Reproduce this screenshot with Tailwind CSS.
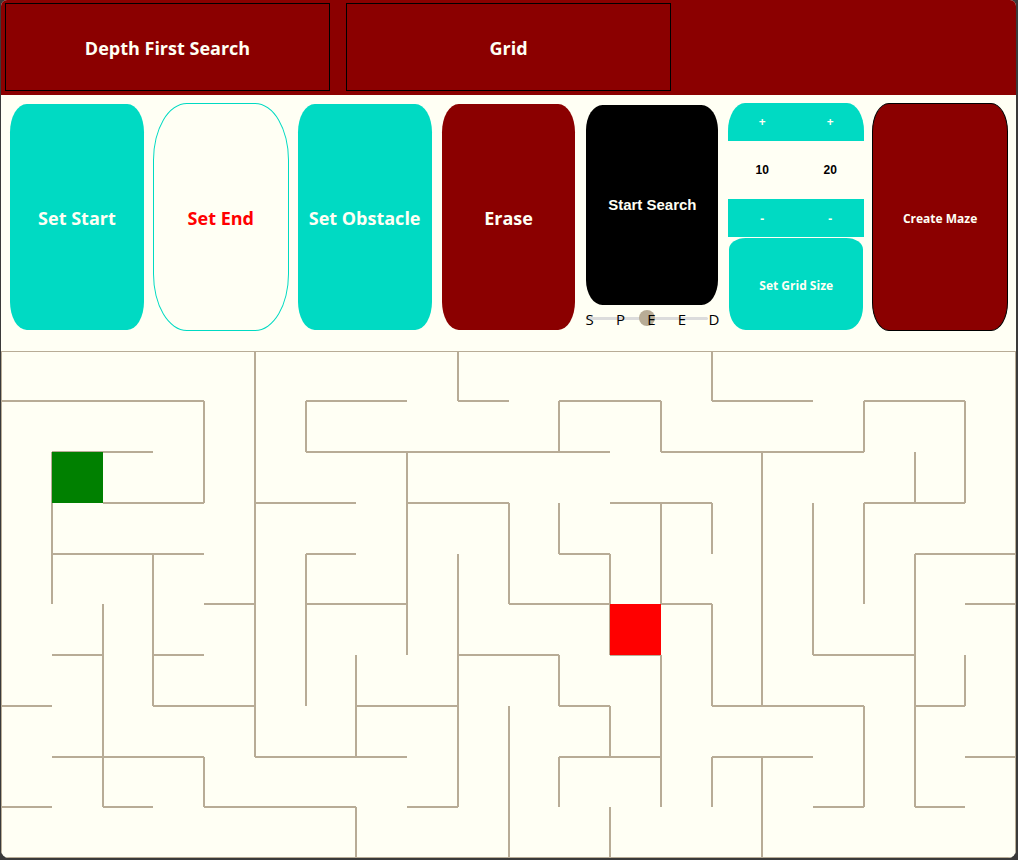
<!DOCTYPE html>
<html lang="en">
<head>
<meta charset="utf-8">
<meta name="viewport" content="width=device-width, initial-scale=1">
<title>Maze Search</title>
<script src="https://cdn.jsdelivr.net/npm/@tailwindcss/browser@4"></script>
</head>
<body class="bg-[#3a3a3a] font-['Open_Sans','Noto_Sans',sans-serif]">
<div class="flex min-h-screen flex-col pr-0.5 pb-0.5 pl-px">
  <main class="flex flex-1 flex-col overflow-hidden rounded-t-md rounded-b-lg bg-[#fffff4]">

    <header class="flex gap-4 bg-[#8b0000] px-1 pt-[3px] pb-1 text-lg font-bold text-[#fffff4]">
      <button type="button" class="h-[88px] w-[325px] border border-black pt-0.5">Depth First Search</button>
      <button type="button" class="h-[88px] w-[325px] border border-black pt-0.5">Grid</button>
    </header>

    <section aria-label="Tools" class="grid h-[256px] grid-cols-7 gap-2 px-2 pt-2 pb-5 text-lg font-bold text-[#fffff4]">
      <button type="button" class="m-px rounded-[12.5%] bg-[#00dac3] pt-0.5">Set Start</button>
      <button type="button" class="rounded-[25%] border border-[#00dac3] pt-0.5 text-[#ff0000]">Set End</button>
      <button type="button" class="m-px rounded-[12.5%] bg-[#00dac3] pt-0.5 whitespace-nowrap">Set Obstacle</button>
      <button type="button" class="m-px rounded-[12.5%] bg-[#8b0000] pt-0.5">Erase</button>

      <div class="flex flex-col">
        <button type="button" class="mx-0.5 mt-0.5 h-[200px] rounded-[12.5%] bg-black font-['Liberation_Sans',Arial,sans-serif] text-[15px]">Start Search</button>
        <div class="relative flex flex-1 items-center">
          <input id="speed" type="range" min="0" max="100" value="50" aria-label="Speed" class="mr-3 ml-0.5 h-4 w-full appearance-none bg-transparent [&::-webkit-slider-runnable-track]:h-[3px] [&::-webkit-slider-runnable-track]:rounded-full [&::-webkit-slider-runnable-track]:bg-[#dcdcdc] [&::-webkit-slider-thumb]:-mt-[7px] [&::-webkit-slider-thumb]:size-4 [&::-webkit-slider-thumb]:appearance-none [&::-webkit-slider-thumb]:rounded-full [&::-webkit-slider-thumb]:bg-[#b8ac96]">
          <label for="speed" class="pointer-events-none absolute inset-x-px top-1 flex justify-between text-[15px] leading-5 font-normal text-black"><span>S</span><span>P</span><span>E</span><span>E</span><span>D</span></label>
        </div>
      </div>

      <div class="flex flex-col text-xs">
        <div class="grid h-[38px] grid-cols-2 overflow-hidden rounded-t-[17px_28px] bg-[#00dac3]">
          <button type="button" aria-label="Increase rows">+</button>
          <button type="button" aria-label="Increase columns">+</button>
        </div>
        <div class="grid h-[58px] grid-cols-2 items-center text-center font-['Liberation_Sans',Arial,sans-serif] text-black">
          <output>10</output>
          <output>20</output>
        </div>
        <div class="grid h-[38px] grid-cols-2 bg-[#00dac3]">
          <button type="button" aria-label="Decrease rows" class="pt-0.5">-</button>
          <button type="button" aria-label="Decrease columns" class="pt-0.5">-</button>
        </div>
        <button type="button" class="m-px flex-1 rounded-[12.5%_12.5%_12.5%_12.5%/12.5%_12.5%_25%_25%] bg-[#00dac3] pt-[3px]">Set Grid Size</button>
      </div>

      <button type="button" class="rounded-[12.5%] border border-black bg-[#8b0000] pt-[3px] text-xs">Create Maze</button>
    </section>

    <svg class="w-full flex-1" viewBox="1 351 1015 507" preserveAspectRatio="none" role="img" aria-label="Maze" shape-rendering="crispEdges">
      <g fill="none" stroke="#b8ac96" stroke-width="2">
        <!-- horizontal walls, row by row -->
        <path d="M1 401H204M306 401H407M458 401H509M559 401H661M712 401H813M864 401H965
          M52 452H153M306 452H610M661 452H864
          M103 503H204M255 503H356M407 503H509M610 503H712M864 503H965
          M52 554H204M306 554H356M559 554H610M915 554H1016
          M204 604H255M306 604H407M509 604H610M661 604H712M965 604H1016
          M52 655H103M153 655H204M458 655H559M610 655H661M813 655H915
          M1 706H52M153 706H255M356 706H458M559 706H610M712 706H864M915 706H965
          M52 757H204M255 757H407M559 757H661M712 757H813M965 757H1016
          M1 807H52M103 807H153M204 807H356M407 807H458M813 807H864M915 807H965"/>
        <!-- vertical walls, column by column -->
        <path d="M52 452V604M103 604V807M153 554V706M204 401V503M204 757V807M255 351V757
          M306 401V452M306 554V706M356 655V757M356 807V858M407 452V655M458 351V401M458 554V807
          M509 503V604M509 706V858M559 401V452M559 503V554M559 655V706M559 757V807
          M610 554V655M610 706V757M610 807V858M661 401V452M661 503V604M661 655V807
          M712 351V401M712 503V554M712 604V706M712 757V807M762 452V706M762 757V858
          M813 503V655M864 401V452M864 503V604M864 706V807M915 452V503M915 554V807
          M965 401V503M965 655V706"/>
        <!-- outer frame, inner half visible -->
        <rect x="1" y="351" width="1015" height="507"/>
      </g>
      <rect x="52" y="452" width="51" height="51" fill="#008000"/>
      <rect x="610" y="604" width="51" height="51" fill="#ff0000"/>
    </svg>
  </main>
</div>
</body>
</html>
